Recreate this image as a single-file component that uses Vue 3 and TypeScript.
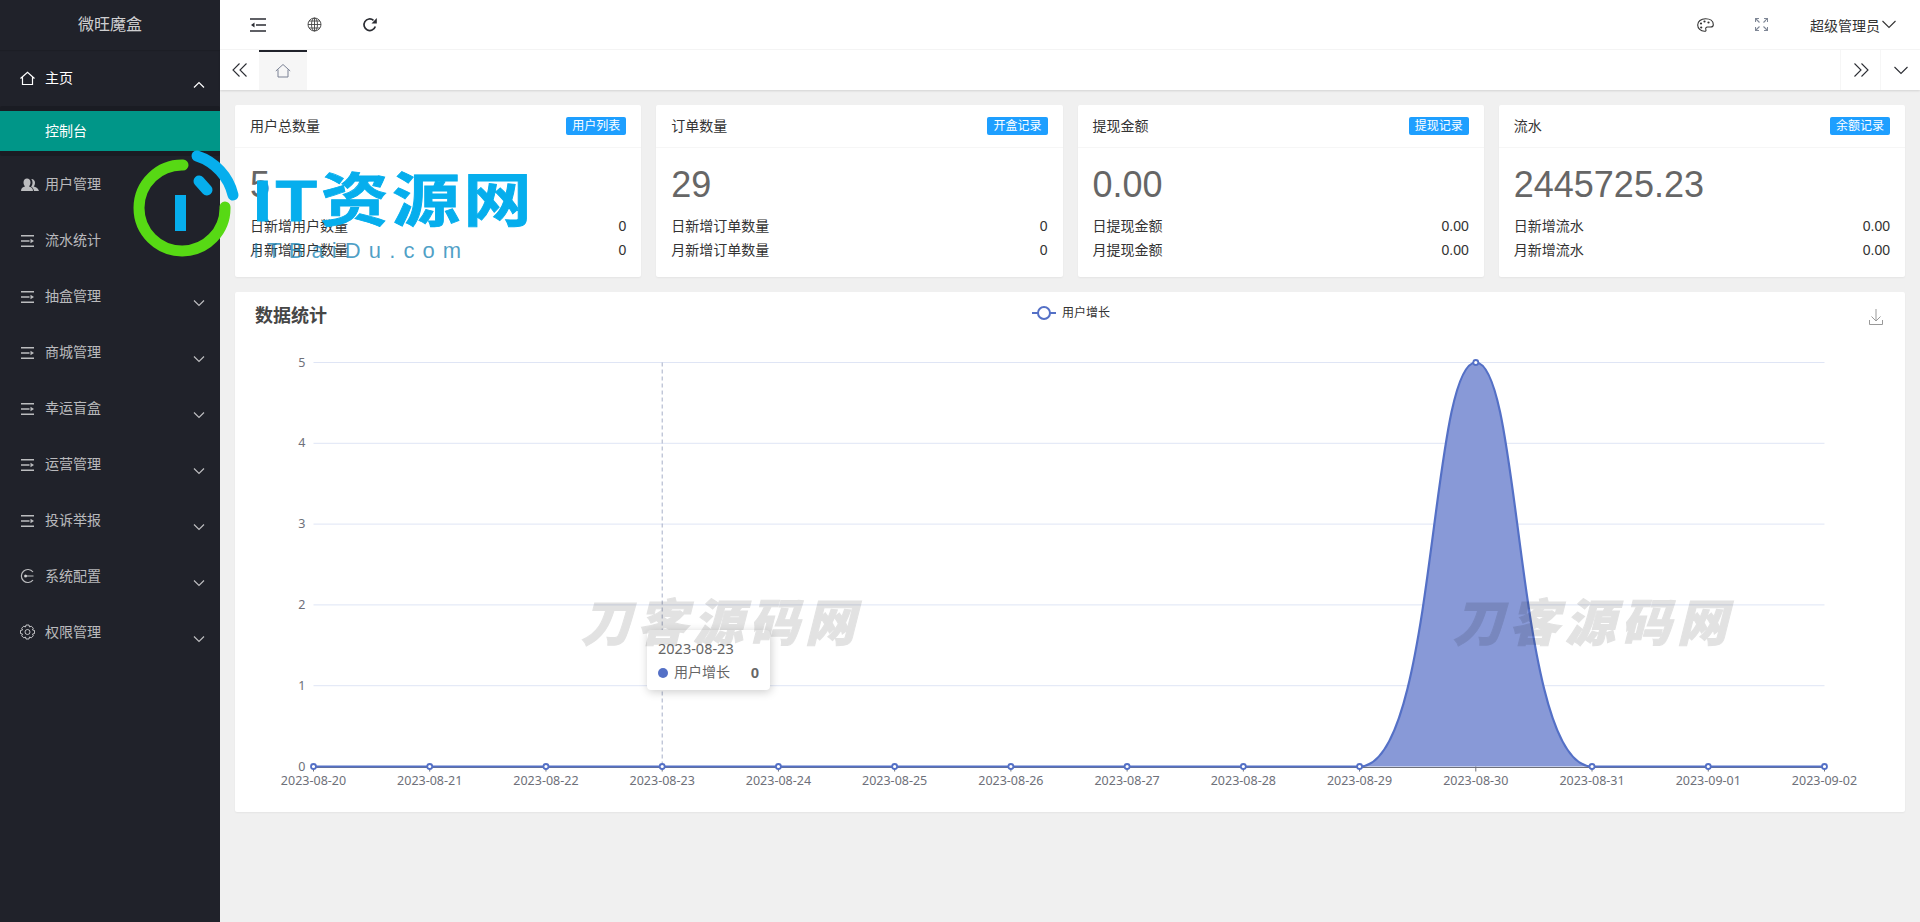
<script setup lang="ts">
import { computed } from 'vue'

type IconName = 'home' | 'users' | 'list' | 'plug' | 'gear'

interface MenuItem {
  label: string
  icon: IconName
  open?: boolean
  arrow?: boolean
}

interface StatCard {
  title: string
  tag: string
  total: string
  rows: { label: string; value: string }[]
}

const menu: MenuItem[] = [
  { label: '主页', icon: 'home', open: true, arrow: true },
  { label: '用户管理', icon: 'users' },
  { label: '流水统计', icon: 'list' },
  { label: '抽盒管理', icon: 'list', arrow: true },
  { label: '商城管理', icon: 'list', arrow: true },
  { label: '幸运盲盒', icon: 'list', arrow: true },
  { label: '运营管理', icon: 'list', arrow: true },
  { label: '投诉举报', icon: 'list', arrow: true },
  { label: '系统配置', icon: 'plug', arrow: true },
  { label: '权限管理', icon: 'gear', arrow: true }
]

const cards: StatCard[] = [
  {
    title: '用户总数量',
    tag: '用户列表',
    total: '5',
    rows: [
      { label: '日新增用户数量', value: '0' },
      { label: '月新增用户数量', value: '0' }
    ]
  },
  {
    title: '订单数量',
    tag: '开盒记录',
    total: '29',
    rows: [
      { label: '日新增订单数量', value: '0' },
      { label: '月新增订单数量', value: '0' }
    ]
  },
  {
    title: '提现金额',
    tag: '提现记录',
    total: '0.00',
    rows: [
      { label: '日提现金额', value: '0.00' },
      { label: '月提现金额', value: '0.00' }
    ]
  },
  {
    title: '流水',
    tag: '余额记录',
    total: '2445725.23',
    rows: [
      { label: '日新增流水', value: '0.00' },
      { label: '月新增流水', value: '0.00' }
    ]
  }
]

const dates = [
  '2023-08-20', '2023-08-21', '2023-08-22', '2023-08-23', '2023-08-24',
  '2023-08-25', '2023-08-26', '2023-08-27', '2023-08-28', '2023-08-29',
  '2023-08-30', '2023-08-31', '2023-09-01', '2023-09-02'
]

const x0 = 78.5
const step = 116.23
const y0 = 475.5
const unit = 80.8
const xAt = (i: number) => x0 + i * step
const yAt = (v: number) => y0 - v * unit
const yTicks = [0, 1, 2, 3, 4, 5]

// one hump between 08-29 and 08-31, same handle lengths on both sides
const hump = computed(() => {
  const l = xAt(9)
  const p = xAt(10)
  const r = xAt(11)
  const a = step * 0.66
  const b = step * 0.4
  return `M${l} ${y0}C${l + a} ${y0} ${p - b} ${yAt(5)} ${p} ${yAt(5)}C${p + b} ${yAt(5)} ${r - a} ${y0} ${r} ${y0}`
})
const area = computed(() => `${hump.value}Z`)
const line = computed(() => `M${xAt(0)} ${y0}H${xAt(9)}${hump.value.slice(hump.value.indexOf('C'))}H${xAt(13)}`)
const valueAt = (i: number) => (i === 10 ? 5 : 0)
</script>

<template>
  <div class="page">
    <aside class="side">
      <div class="brand">微旺魔盒</div>
      <nav>
        <template v-for="item in menu" :key="item.label">
          <a class="item" :class="{ on: item.open }">
            <svg class="mi" viewBox="0 0 20 16">
              <template v-if="item.icon === 'home'">
                <path d="M.5 8.500 7.500 2.300l7 6.200M2.500 7.300V14.500h10V7.300" fill="none" stroke="currentColor" stroke-width="1.200" />
              </template>
              <template v-else-if="item.icon === 'users'">
                <path d="M1 15c0-3 2-4 4-4.500-1-1-1.500-2.500-1.500-4.200C3.500 4 5 2.500 7 2.500S10.500 4 10.500 6.300c0 1.700-.5 3.200-1.500 4.200 2 .5 4 1.500 4 4.500z" fill="currentColor" />
                <path d="M12 3c2 .5 3 2 3 3.700 0 1.500-.5 3-1.300 3.800 2 .5 4.300 1.500 5.300 4.500H14c-.3-2-1.500-3.600-3-4.500 1-1.200 1.500-2.300 1.500-3.800 0-1.500-.3-2.700-1.200-3.500z" fill="currentColor" />
              </template>
              <template v-else-if="item.icon === 'list'">
                <path d="M1 3.800h13M1 9h8.500M1 14.200h13" stroke="currentColor" stroke-width="1.600" fill="none" />
                <path d="M10.500 6.800 14 9l-3.500 2.200z" fill="currentColor" />
              </template>
              <template v-else-if="item.icon === 'plug'">
                <path d="M13 4A6.500 6.500 0 1 0 13 12M5 8h8.500" stroke="currentColor" stroke-width="1.200" fill="none" />
                <circle cx="5.500" cy="8" r="1.500" fill="currentColor" />
              </template>
              <template v-else>
                <path d="M6 1h3l.5 2 1.800-.8 2 2-.8 1.800 2 .5v3l-2 .5.8 1.800-2 2-1.800-.8-.5 2H6l-.5-2-1.800.8-2-2 .8-1.800-2-.5v-3l2-.5-.8-1.800 2-2 1.800.8z" stroke="currentColor" fill="none" />
                <circle cx="7.500" cy="8" r="2.500" stroke="currentColor" fill="none" />
              </template>
            </svg>
            <span class="txt">{{ item.label }}</span>
            <svg v-if="item.arrow" class="ar" viewBox="0 0 12 8">
              <path :d="item.open ? 'M1 6.500 6 1.500l5 5' : 'M1 1.500l5 5 5-5'" fill="none" stroke="currentColor" stroke-width="1.200" />
            </svg>
          </a>
          <div v-if="item.open" class="sub"><a>控制台</a></div>
        </template>
      </nav>
    </aside>

    <div class="right">
      <header class="top">
        <button class="tool">
          <svg width="16" height="14" viewBox="0 0 16 14">
            <path d="M0 1h16M6 7h10M0 13h16" stroke="#2b2d33" stroke-width="1.500" />
            <path d="M4.500 4.500 1 7l3.500 2.500z" fill="#2b2d33" />
          </svg>
        </button>
        <button class="tool">
          <svg width="15" height="15" viewBox="0 0 15 15" fill="none" stroke="#444" stroke-width=".9">
            <circle cx="7.500" cy="7.500" r="6.500" />
            <ellipse cx="7.500" cy="7.500" rx="3" ry="6.500" />
            <path d="M7.500 1v13M1 7.500h13M2 4h11M2 11h11" />
          </svg>
        </button>
        <button class="tool">
          <svg width="16" height="16" viewBox="0 0 16 16">
            <path d="M13.300 9.500A5.800 5.800 0 1 1 11.500 3.300" fill="none" stroke="#2b2d33" stroke-width="1.700" />
            <path d="M9.500 6.500h5.300V1z" fill="#2b2d33" />
          </svg>
        </button>
        <div class="top-right">
          <svg class="palette" width="17" height="14" viewBox="0 0 17 14">
            <path d="M8.500.7C4 .7.7 3.500.7 7s3 6.300 6.800 6.300c1.500 0 1.800-1 1.300-2-.5-1.200.2-2.300 1.700-2.300h3c1.800 0 2.800-.8 2.800-2.300C16.300 3 13 .7 8.500.7z" fill="none" stroke="#333" stroke-width="1.100" />
            <circle cx="4" cy="5.500" r="1.100" fill="#333" />
            <circle cx="7.500" cy="3.500" r="1.100" fill="#333" />
            <circle cx="11.500" cy="4.500" r="1.100" fill="#333" />
            <circle cx="4.200" cy="9.500" r="1.100" fill="#333" />
          </svg>
          <svg class="full" width="13" height="13" viewBox="0 0 13 13" fill="none" stroke="#7f8796" stroke-width="1.100">
            <path d="M.5 4V.5H4M1 1l3.500 3.500M9 .5h3.500V4M12 1 8.500 4.500M.5 9v3.500H4M1 12l3.500-3.500M12.500 9v3.500H9M12 12 8.500 8.500" />
          </svg>
          <span class="admin">超级管理员</span>
          <svg width="14" height="9" viewBox="0 0 14 9">
            <path d="M.5 1 7 7.500 13.500 1" fill="none" stroke="#333" stroke-width="1.100" />
          </svg>
        </div>
      </header>

      <div class="tabs">
        <button class="tab-btn first">
          <svg width="16" height="14" viewBox="0 0 16 14" fill="none" stroke="#2b2d33" stroke-width="1.100">
            <path d="M7.500.5 1 7l6.500 6.500M14.500.5 8 7l6.500 6.500" />
          </svg>
        </button>
        <div class="tab-home">
          <svg width="16" height="16" viewBox="0 0 16 16">
            <path d="M.8 8 8 1.500 15.200 8M3 6.500V14h10V6.500" fill="none" stroke="#7a8194" />
          </svg>
        </div>
        <div class="tab-fill"></div>
        <button class="tab-btn">
          <svg width="16" height="14" viewBox="0 0 16 14" fill="none" stroke="#2b2d33" stroke-width="1.100">
            <path d="M1.500.5 8 7l-6.500 6.500M8.500.5 15 7l-6.500 6.500" />
          </svg>
        </button>
        <button class="tab-btn">
          <svg width="14" height="9" viewBox="0 0 14 9">
            <path d="M.5 1 7 7.500 13.500 1" fill="none" stroke="#2b2d33" stroke-width="1.100" />
          </svg>
        </button>
      </div>

      <main class="content">
        <section class="stats">
          <div v-for="card in cards" :key="card.title" class="card">
            <div class="card-head">
              <span class="card-title">{{ card.title }}</span>
              <em class="tag">{{ card.tag }}</em>
            </div>
            <div class="card-body">
              <div class="total">{{ card.total }}</div>
              <p v-for="row in card.rows" :key="row.label" class="row">
                <span>{{ row.label }}</span>
                <span>{{ row.value }}</span>
              </p>
            </div>
          </div>
        </section>

        <section class="chart">
          <svg class="plot" width="1670" height="520" viewBox="0 1 1670 520">
            <text x="20" y="31" class="c-title">数据统计</text>

            <path d="M797 22h24" stroke="#5470c6" stroke-width="2" />
            <circle cx="809" cy="22" r="6" fill="#fff" stroke="#5470c6" stroke-width="2" />
            <text x="827" y="26" class="c-legend">用户增长</text>

            <g fill="none" stroke="#999" transform="translate(1634 18)">
              <path d="M7 0v12M2.500 7.500 7 12l4.500-4.500M.5 11v4.500h13V11" />
            </g>

            <g v-for="v in yTicks" :key="v">
              <path v-if="v" :d="`M${x0} ${yAt(v)}H${xAt(13)}`" stroke="#dfe5f5" />
              <text :x="x0 - 8" :y="yAt(v) + 4" text-anchor="end" class="c-axis">{{ v }}</text>
            </g>

            <path :d="`M${xAt(3)} ${yAt(5)}V${y0}`" stroke="#a6afc7" stroke-dasharray="4 3" />

            <path :d="`M${x0} ${y0 + 1}H${xAt(13)}`" stroke="#6e7079" />
            <path :d="area" fill="#8899d7" />
            <path :d="line" fill="none" stroke="#5470c6" stroke-width="2.200" />

            <g v-for="(d, i) in dates" :key="d">
              <path :d="`M${xAt(i)} ${y0}v5`" stroke="#6e7079" />
              <circle :cx="xAt(i)" :cy="yAt(valueAt(i))" r="2.500" fill="#fff" stroke="#5470c6" stroke-width="1.800" />
              <text :x="xAt(i)" :y="y0 + 18" text-anchor="middle" class="c-axis">{{ d }}</text>
            </g>
          </svg>

          <div class="tip">
            <div class="tip-date">2023-08-23</div>
            <div class="tip-row">
              <i></i>
              <span>用户增长</span>
              <b>0</b>
            </div>
          </div>

          <div class="mark one">刀客源码网</div>
          <div class="mark two">刀客源码网</div>
        </section>
      </main>
    </div>

    <div class="stamp">
      <svg class="stamp-ring" width="112" height="112" viewBox="0 0 112 112" fill="none">
        <path d="M53 11A43 43 0 1 0 95 53" stroke="#57d914" stroke-width="11" stroke-linecap="round" />
        <path d="M67 2A54 54 0 0 1 103 41" stroke="#06aeed" stroke-width="11" stroke-linecap="round" />
        <path d="M69 27 77 36" stroke="#06aeed" stroke-width="11" stroke-linecap="round" />
        <rect x="45" y="41" width="11" height="36" fill="#06aeed" />
      </svg>
      <div class="stamp-text">
        <div class="stamp-cn">IT资源网</div>
        <div class="stamp-en">ITBaiDu.com</div>
      </div>
    </div>
  </div>
</template>

<style>
html,
body {
  margin: 0;
  background: #f0f0f0;
}
</style>

<style scoped>
.page {
  position: relative;
  display: flex;
  width: 1920px;
  height: 922px;
  overflow: hidden;
  font-family: "Liberation Sans", "Noto Sans CJK SC", sans-serif;
  font-size: 14px;
  color: #333;
}

.side {
  width: 220px;
  flex: none;
  background: #20222a;
  color: rgba(255, 255, 255, 0.7);
}

.brand {
  height: 50px;
  line-height: 50px;
  text-align: center;
  font-size: 16px;
  color: rgba(255, 255, 255, 0.8);
  box-shadow: 0 1px 1px rgba(0, 0, 0, 0.1);
}

.item {
  display: flex;
  align-items: center;
  height: 56px;
  padding: 0 15px 0 20px;
}

.item.on {
  color: #fff;
}

.mi {
  width: 20px;
  height: 16px;
  margin-right: 5px;
}

.txt {
  margin-top: -2px;
}

.ar {
  width: 12px;
  height: 8px;
  margin: 14px 0 0 auto;
}

.sub {
  padding: 5px 0;
  background: #1a1c23;
  border-radius: 2px;
}

.sub a {
  display: block;
  height: 40px;
  line-height: 40px;
  padding-left: 45px;
  background: #009688;
  color: #fff;
}

.right {
  flex: 1;
  min-width: 0;
  display: flex;
  flex-direction: column;
}

.top {
  display: flex;
  align-items: center;
  height: 49px;
  flex: none;
  padding-left: 10px;
  background: #fff;
  border-bottom: 1px solid #f6f6f6;
}

button {
  border: 0;
  padding: 0;
  background: none;
  display: flex;
  align-items: center;
  justify-content: center;
}

.tool {
  width: 56px;
  height: 49px;
}

.top-right {
  display: flex;
  align-items: center;
  margin-left: auto;
  padding-right: 24px;
}

.palette {
  margin-right: 41px;
}

.full {
  margin-right: 42px;
}

.admin {
  margin-right: 2px;
}

.tabs {
  display: flex;
  height: 40px;
  flex: none;
  background: #fff;
  box-shadow: 0 1px 2px rgba(0, 0, 0, 0.12);
  z-index: 1;
}

.tab-btn {
  width: 40px;
  height: 40px;
  border-left: 1px solid #f6f6f6;
}

.tab-btn.first {
  width: 39px;
  border-left: 0;
}

.tab-home {
  width: 48px;
  height: 38px;
  background: #f6f6f6;
  border-top: 2px solid #20222a;
  display: flex;
  align-items: center;
  justify-content: center;
}

.tab-fill {
  flex: 1;
}

.content {
  flex: 1;
  padding: 15px;
  background: #f0f0f0;
}

.stats {
  display: grid;
  grid-template-columns: repeat(4, 1fr);
  gap: 15px;
}

.card {
  height: 172px;
  background: #fff;
  border-radius: 2px;
  box-shadow: 0 1px 2px rgba(0, 0, 0, 0.05);
}

.card-head {
  display: flex;
  align-items: center;
  justify-content: space-between;
  height: 42px;
  padding: 0 15px;
  border-bottom: 1px solid #f6f6f6;
}

.card-title {
  margin-top: -2px;
}

.tag {
  height: 18px;
  line-height: 18px;
  padding: 0 6px;
  font-size: 12px;
  font-style: normal;
  color: #fff;
  background: #1e9fff;
  border-radius: 2px;
}

.card-body {
  padding: 19px 15px 0;
}

.total {
  height: 36px;
  line-height: 36px;
  margin-bottom: 11px;
  font-size: 36px;
  color: #666;
}

.row {
  display: flex;
  justify-content: space-between;
  height: 24px;
  line-height: 24px;
  margin: 0;
}

.chart {
  position: relative;
  height: 520px;
  margin-top: 15px;
  background: #fff;
  border-radius: 2px;
  box-shadow: 0 1px 2px rgba(0, 0, 0, 0.05);
}

.plot {
  display: block;
}

.c-title {
  font-size: 18px;
  font-weight: 700;
  fill: #464646;
}

.c-legend {
  font-size: 12px;
  fill: #333;
}

.c-axis {
  font-family: "Noto Sans", "Noto Sans CJK SC", sans-serif;
  font-size: 12.500px;
  fill: #6e7079;
}

.tip {
  position: absolute;
  left: 412px;
  top: 338px;
  width: 123px;
  height: 60px;
  box-sizing: border-box;
  padding: 9px 11px;
  background: #fff;
  border-radius: 4px;
  box-shadow: 1px 2px 10px rgba(0, 0, 0, 0.2);
  color: #666;
}

.tip-date {
  font-family: "Noto Sans", "Noto Sans CJK SC", sans-serif;
  font-size: 14.500px;
  line-height: 19px;
}

.tip-row {
  display: flex;
  align-items: center;
  margin-top: 5px;
  line-height: 19px;
}

.tip-row i {
  width: 10px;
  height: 10px;
  margin-right: 6px;
  border-radius: 50%;
  background: #5470c6;
}

.tip-row b {
  margin-left: auto;
  font-size: 15px;
}

.mark {
  position: absolute;
  top: 300px;
  font-size: 50px;
  line-height: 64px;
  font-weight: 900;
  font-style: italic;
  letter-spacing: 6px;
  white-space: nowrap;
  color: #000;
  -webkit-text-stroke: 1px #000;
  opacity: 0.11;
  pointer-events: none;
}

.mark.one {
  left: 346px;
}

.mark.two {
  left: 1218px;
}

.stamp {
  position: absolute;
  left: 130px;
  top: 154px;
  display: flex;
  pointer-events: none;
}

.stamp-ring {
  overflow: visible;
}

.stamp-text {
  margin: 19px 0 0 11px;
}

.stamp-cn {
  height: 61px;
  font-size: 68px;
  line-height: 64px;
  font-weight: 700;
  color: #06aeed;
  white-space: nowrap;
  letter-spacing: 3.500px;
  -webkit-text-stroke: 1px #06aeed;
  transform: scaleY(0.85);
  transform-origin: 0 0;
}

.stamp-en {
  margin-top: 4px;
  font-size: 22px;
  line-height: 26px;
  letter-spacing: 8.100px;
  color: rgba(20, 130, 180, 0.75);
  white-space: nowrap;
}
</style>
